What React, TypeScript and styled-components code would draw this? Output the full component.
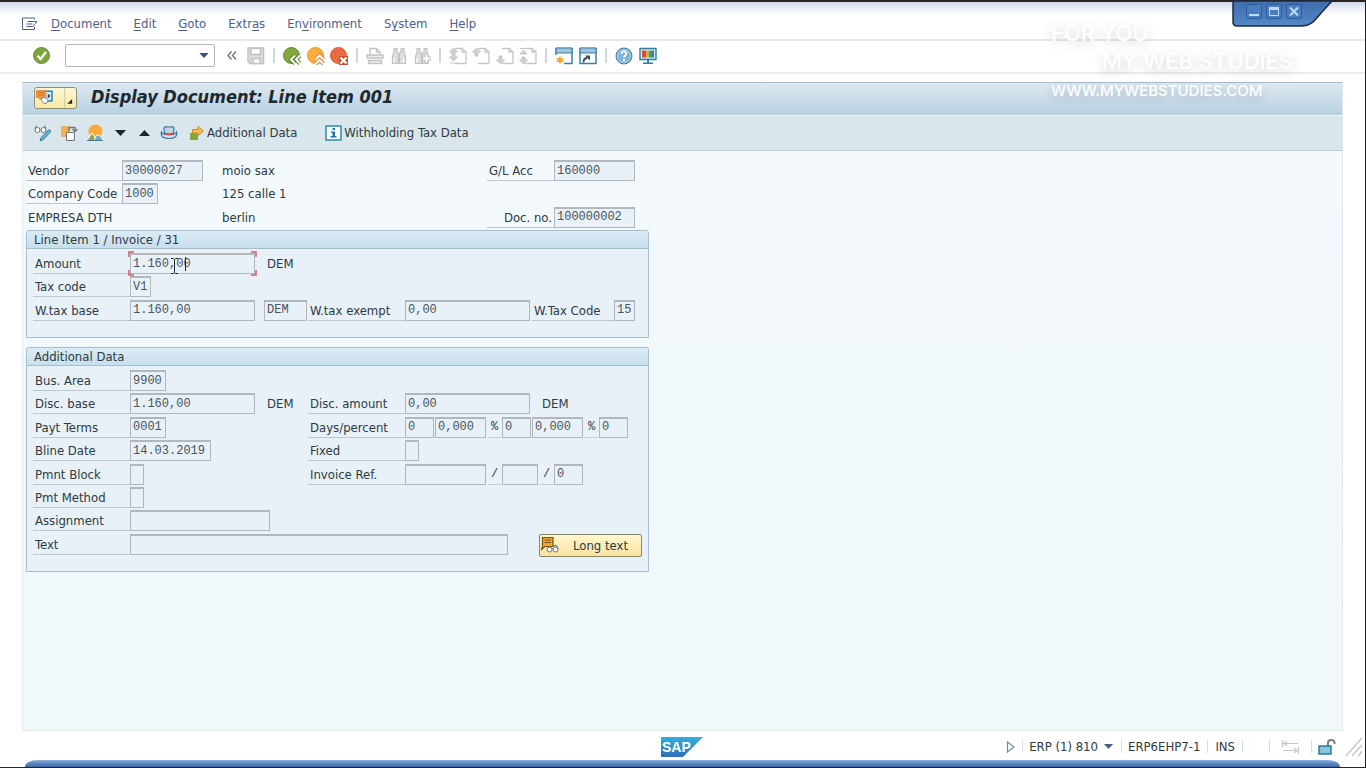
import React from "react";
import styled, { createGlobalStyle } from "styled-components";

const ui = `"DejaVu Sans Condensed", "DejaVu Sans", Tahoma, sans-serif`;
const mono = `"Liberation Mono", "Courier New", monospace`;

const GlobalStyle = createGlobalStyle`
  * { box-sizing: border-box; }
  html, body { margin: 0; padding: 0; }
  body { background: #fff; color: #2e3a42; font-family: ${ui}; font-size: 13px; }
  button, input, select { font: inherit; color: inherit; margin: 0; }
`;

const Window = styled.div`
  position: relative;
  display: flex;
  flex-direction: column;
  min-height: 100vh;
  border-top: 2px solid #2a2427;
  border-right: 1px solid #1d1d20;
  border-bottom: 1px solid #1f2733;
  background: linear-gradient(#cfd7e8, #eef1f8 7px, #fff 13px) no-repeat #fff;
`;

const MenuBar = styled.nav`
  display: flex;
  align-items: center;
  gap: 22px;
  height: 39px;
  padding: 7px 22px 0;
  border-bottom: 2px solid #e9e9eb;
`;

const MenuIcon = styled.span`
  display: flex;
  width: 16px;
  margin-right: -9px;
`;

const MenuItem = styled.button`
  padding: 0;
  border: 0;
  background: none;
  color: #4d6088;
  line-height: 18px;
  u { text-underline-offset: 2px; }
`;

const SystemBar = styled.div`
  display: flex;
  align-items: center;
  height: 33px;
  padding-left: 33px;
  padding-bottom: 2px;
  border-bottom: 2px solid #ebebed;
`;

const IconButton = styled.button<{ $width?: number }>`
  display: flex;
  align-items: center;
  justify-content: center;
  width: ${(p) => p.$width ?? 18}px;
  height: 20px;
  padding: 0;
  border: 0;
  background: none;
  svg { display: block; flex: none; }
`;

const IconGroup = styled.div<{ $width: number }>`
  display: flex;
  justify-content: space-between;
  width: ${(p) => p.$width}px;
`;

const BarRule = styled.span`
  width: 2px;
  height: 15px;
  margin: 0 8px;
  background: #c9dae4;
`;

const CommandBox = styled.div`
  position: relative;
  width: 150px;
  height: 23px;
  margin: 0 8px 0 14px;
  svg { position: absolute; right: 6px; top: 9px; pointer-events: none; }
`;

const CommandSelect = styled.select`
  appearance: none;
  width: 100%;
  height: 100%;
  border: 1px solid #b4b4b6;
  border-radius: 2px;
  background: #fff;
`;

const Collapse = styled(IconButton)`
  margin-right: 6px;
  color: #666b72;
`;

const Panel = styled.main`
  display: flex;
  flex: 1;
  flex-direction: column;
  margin: 8px 22px 0 22px;
  border: 1px solid #e3e9ee;
  border-top-color: #a9bccb;
  background: linear-gradient(#f3f9fc, #f0f8fa);
`;

const TitleBar = styled.header`
  display: flex;
  align-items: center;
  height: 33px;
  padding: 0 11px 2px;
  border-bottom: 1px solid #f0f7fa;
  background: linear-gradient(#dce9f1, #b7d1e0);
`;

const ServiceButton = styled.button`
  display: flex;
  align-items: stretch;
  width: 43px;
  height: 22px;
  padding: 0;
  border: 1px solid #8d8f7c;
  border-radius: 3px;
  background: linear-gradient(#fff8d8, #fbe8a4);
`;

const Title = styled.h1`
  margin: 0 0 2px 14px;
  color: #20282e;
  font-size: 18px;
  line-height: 24px;
  font-style: italic;
  font-weight: 700;
  white-space: nowrap;
`;

const AppBar = styled.div`
  display: flex;
  align-items: center;
  height: 35px;
  padding: 0 11px;
  border-bottom: 1px solid #b9cdd8;
  background: #d9e7ed;
`;

const AppIcons = styled.div`
  display: flex;
  gap: 8px;
  margin-right: 11px;
`;

const AppButton = styled.button`
  display: flex;
  align-items: center;
  gap: 2px;
  margin-right: 28px;
  padding: 0;
  border: 0;
  background: none;
  line-height: 18px;
  white-space: nowrap;
`;

const Form = styled.form`
  width: 626px;
  padding: 9px 0 0 3px;
`;

const Rows = styled.div<{ $count: number; $height: number }>`
  display: grid;
  grid-template-rows: repeat(${(p) => p.$count}, 1fr);
  height: ${(p) => p.$height}px;
`;

const HeadRow = styled.div`
  display: grid;
  grid-template-columns: 96px 100px 265px 67px 81px;
  align-items: start;
`;

const Row = styled.div`
  display: flex;
  align-items: flex-start;
`;

const LeftCell = styled.div`
  display: flex;
  flex: none;
  width: 275px;
`;

const Label = styled.label<{ $width: number; $end?: boolean; $gap?: number }>`
  flex: none;
  width: ${(p) => p.$width}px;
  height: 21px;
  margin-left: ${(p) => p.$gap ?? 0}px;
  padding: 0 2px;
  border-bottom: 1px solid #c0c6cb;
  line-height: 21px;
  text-align: ${(p) => (p.$end ? "right" : "left")};
  white-space: nowrap;
`;

const Plain = styled.span<{ $indent?: number }>`
  padding-left: ${(p) => p.$indent ?? 0}px;
  line-height: 21px;
  white-space: nowrap;
`;

const Mark = styled.span`
  width: 13px;
  height: 21px;
  margin: 0 1px 0 2px;
  border-bottom: 1px solid #c8cdd2;
  font-family: ${mono};
  font-size: 12px;
  line-height: 21px;
  text-align: center;
`;

const Field = styled.input<{ $width: number; $gap?: number }>`
  flex: none;
  display: block;
  width: ${(p) => p.$width}px;
  height: 21px;
  margin-left: ${(p) => p.$gap ?? 0}px;
  padding: 0 0 1px 2px;
  border: 1px solid #b0b6bb;
  border-top: 2px solid #b2b7bc;
  outline: 0;
  border-radius: 0;
  background: #e8f1f7;
  color: #4a545e;
  font-family: ${mono};
  font-size: 12px;
`;

const FocusFrame = styled.div`
  position: relative;
  svg { position: absolute; left: -2px; top: -2px; pointer-events: none; }
`;

const Group = styled.section`
  margin-bottom: 9px;
  border: 1px solid #a5bfd0;
  border-radius: 3px 3px 0 0;
  background: #e8f1f8;
`;

const GroupTitle = styled.h2`
  height: 18px;
  margin: 0;
  padding-left: 7px;
  border-bottom: 1px solid #a5bfd0;
  border-radius: 3px 3px 0 0;
  background: linear-gradient(#dcecf5, #c8dfec);
  font-size: 13px;
  font-weight: 400;
  line-height: 17px;
`;

const GroupBody = styled.div`
  padding: 4px 6px 14px;
`;

const LongText = styled.button`
  display: flex;
  align-items: center;
  gap: 13px;
  width: 103px;
  height: 23px;
  margin-left: 31px;
  padding: 0 0 0 1px;
  border: 1px solid #8a8468;
  border-radius: 2px;
  background: linear-gradient(#fff7cf, #fbe3a0);
  white-space: nowrap;
  svg { flex: none; }
`;

const StatusBar = styled.footer`
  display: grid;
  grid-template-columns: 1fr auto 1fr;
  align-items: center;
  height: 29px;
  padding: 2px 2px 0 0;
`;

const StatusRight = styled.div`
  display: flex;
  align-items: center;
  justify-content: flex-end;
  white-space: nowrap;
  svg { display: block; }
`;

const StatusRule = styled.span<{ $before: number; $after: number }>`
  width: 1px;
  height: 13px;
  margin: 0 ${(p) => p.$after}px 0 ${(p) => p.$before}px;
  background: #d8dbe0;
`;

const StatusButton = styled.button`
  display: flex;
  align-items: center;
  gap: 6px;
  padding: 0;
  border: 0;
  background: none;
`;

const SizeGrip = styled.span`
  margin-left: 9px;
`;

const BottomEdge = styled.div`
  height: 7px;
  margin: 0 25px;
  border-radius: 12px 12px 0 0 / 7px 7px 0 0;
  background: linear-gradient(#8fb2df, #5f8cc6 3px, #4068a8);
`;

const WindowTab = styled.div`
  position: absolute;
  top: -2px;
  right: 30px;
  width: 104px;
  height: 30px;
  > svg { position: absolute; inset: 0; }
`;

const TabButtons = styled.div`
  position: relative;
  display: flex;
  gap: 4px;
  padding: 4px 0 0 15px;
`;

const TabButton = styled.button`
  display: flex;
  align-items: center;
  justify-content: center;
  width: 16px;
  height: 15px;
  padding: 0;
  border: 1px solid #315c9a;
  border-radius: 2px;
  background: #4a7dbe;
`;

const Watermark = styled.div`
  position: absolute;
  top: 17px;
  right: 72px;
  width: 242px;
  color: #fff;
  font-family: Inter, sans-serif;
  font-weight: 500;
  pointer-events: none;
  text-shadow: 0 4px 10px rgba(90, 90, 90, 0.17), 0 2px 12px rgba(90, 90, 90, 0.1);
`;

const MarkLine = styled.div<{ $size: number; $end?: boolean; $height: number }>`
  font-size: ${(p) => p.$size}px;
  line-height: ${(p) => p.$height}px;
  text-align: ${(p) => (p.$end ? "right" : "left")};
  white-space: nowrap;
`;

const Caret = ({ up = false, size = 11, color = "#1f262b" }) => (
  <svg width={size} height={size === 11 ? 6 : 5} viewBox="0 0 11 6">
    <path d={up ? "M0 6 5.500 0 11 6z" : "M0 0h11L5.500 6z"} fill={color} />
  </svg>
);

const Disc = ({ fill, edge, children }: { fill: string; edge: string; children: React.ReactNode }) => (
  <svg width="18" height="18" viewBox="0 0 18 18">
    <circle cx="8.500" cy="8.500" r="8" fill={fill} stroke={edge} />
    {children}
  </svg>
);

const chevronsLeft = "M12 8.500 8 12.500l4 4M17 8.500l-4 4 4 4";
const chevronsUp = "M8.500 12.500l4-4 4 4M8.500 17l4-4 4 4";

const CheckIcon = () => (
  <Disc fill="#7fa63c" edge="#5f8d35">
    <path d="M4.500 8.800l3 3.200 5.500-7" fill="none" stroke="#fff" strokeWidth="2.200" />
  </Disc>
);
const BackIcon = () => (
  <Disc fill="#83a83b" edge="#5f8a37">
    <path d={chevronsLeft} fill="none" stroke="#55822f" strokeWidth="4" />
    <path d={chevronsLeft} fill="none" stroke="#fff" strokeWidth="2" />
  </Disc>
);
const UpIcon = () => (
  <Disc fill="#fbae3e" edge="#e99a35">
    <path d={chevronsUp} fill="none" stroke="#e07a2e" strokeWidth="4" />
    <path d={chevronsUp} fill="none" stroke="#fff" strokeWidth="2" />
  </Disc>
);
const CancelIcon = () => (
  <Disc fill="#ea6a45" edge="#d95b3d">
    <path d="M9 9h9v9H9z" fill="#d94a2c" />
    <path d="M10.500 10.500l6 6M16.500 10.500l-6 6" stroke="#fff" strokeWidth="2.200" />
  </Disc>
);
const SaveIcon = () => (
  <svg width="18" height="18" viewBox="0 0 18 18" fill="none" stroke="#c3c3c5" strokeWidth="1.500">
    <path d="M1 1h15.500v15.500H3L1 14.500z" fill="#dcdcde" />
    <path d="M4 1.500h9.500v6H4z" fill="#fff" />
    <path d="M4.500 11.500h8.500v5H4.500z" fill="#fff" />
    <path d="M6.500 12.500v3" />
  </svg>
);
const PrintIcon = () => (
  <svg width="18" height="18" viewBox="0 0 18 18" fill="none" stroke="#c3c3c5" strokeWidth="1.400">
    <path d="M4 8V1.500h6.500L14 5v3" fill="#fff" />
    <path d="M10.500 1.500V5H14" />
    <path d="M1 8h16v3H1z" fill="#ececee" />
    <path d="M2.500 13.500h13v3h-13z" fill="#ececee" />
  </svg>
);
const Binoculars = ({ next = false }) => (
  <svg width="18" height="18" viewBox="0 0 18 18" stroke="#c3c3c5" strokeWidth="1.200" fill="#dededf">
    <path d="M4 1.500h3v3l1.500 2v10h-6V9L4 5z" />
    <path d="M14 1.500h-3v3l-1.500 2v10h6V9L14 5z" />
    <path d="M4 11.500v4M13.500 11.500v4" stroke="#fff" />
    {next && <path d="M12 7h3v3h3v3h-3v3h-3v-3H9.500v-3H12z" fill="#fff" />}
  </svg>
);
const PageIcon = ({ kind }: { kind: "first" | "prev" | "next" | "last" }) => {
  const arrow = {
    first: "M4.500 1l4 4H6v5h2.500l-4 4-4-4H3V5H.500zM1 16h7",
    prev: "M4.500 1l4 4H6v4H3V5H.500z",
    next: "M4.500 17l4-4H6V9H3v4H.500z",
    last: "M1 1.500h7M4.500 3l3.500 4H1zM4.500 17l4-4H6v-3H3v3H.500z",
  }[kind];
  return (
    <svg width="18" height="18" viewBox="0 0 18 18" stroke="#c6c6c8" strokeWidth="1.300" fill="none">
      <path d="M6 1.500h7L17 5v11.500H6" fill="#fff" />
      <path d="M13 1.500V5h4" />
      <path d={arrow} fill="#cfcfd1" strokeWidth="1" />
    </svg>
  );
};
const NewWindowIcon = () => (
  <svg width="18" height="18" viewBox="0 0 18 18" fill="none">
    <path d="M1 8V1.500h16v15H9" stroke="#3d7da6" strokeWidth="1.500" />
    <path d="M1 1h16v5H1z" fill="#9cc5de" stroke="#3d7da6" />
    <path d="M5 8.500l1.200 3 3-.8-1.800 2.300 1.800 2.300-3-.6L5 17.700l-1.200-3-3 .6L2.600 13 .8 10.700l3 .8z" fill="#f4a52d" />
  </svg>
);
const ShortcutIcon = () => (
  <svg width="18" height="18" viewBox="0 0 18 18" fill="none">
    <path d="M1 1.500h16v15H1z" stroke="#3d7da6" strokeWidth="1.500" fill="#fff" />
    <path d="M1 1h16v5H1z" fill="#9cc5de" stroke="#3d7da6" />
    <path d="M4.500 15.500c0-3 1.500-4.500 4-4.500" stroke="#444a50" strokeWidth="1.800" />
    <path d="M6 8.500h5v5z" fill="#444a50" />
  </svg>
);
const HelpIcon = () => (
  <svg width="18" height="18" viewBox="0 0 18 18">
    <circle cx="9" cy="9" r="8" fill="#7fb2d6" stroke="#3f7ba9" />
    <circle cx="9" cy="9" r="6.500" fill="none" stroke="#b8d6e8" strokeWidth="1" />
    <path d="M6.500 7c0-3.500 5-3.300 5-.5 0 2-2.500 2-2.500 4M9 12v2" fill="none" stroke="#fff" strokeWidth="1.800" />
  </svg>
);
const MonitorIcon = () => (
  <svg width="18" height="18" viewBox="0 0 18 18">
    <path d="M1 1.500h16v11H1z" fill="#d7e8ef" stroke="#2d7f9f" strokeWidth="1.400" />
    <path d="M3 3.500h4v7H3z" fill="#d9493a" />
    <path d="M7 3.500h2.500v7H7z" fill="#e9a83c" />
    <path d="M9.500 3.500H12v7H9.500z" fill="#5e9f48" />
    <path d="M12 3.500h3v7h-3z" fill="#3b7fb8" />
    <path d="M8 13h2v2.500h4V17H4v-1.500h4z" fill="#2d7f9f" />
  </svg>
);
const ServiceIcon = () => (
  <svg width="42" height="20" viewBox="0 0 42 20">
    <path d="M1.500 2.500h10v7H7l-2 2v-2H1.500z" fill="#f79a45" stroke="#e07f2c" />
    <path d="M3 4.500h7M3 7h7" stroke="#c96a22" />
    <path d="M11.500 3h6v10h-6" fill="#d5edf5" stroke="#2e83a8" strokeWidth="1.500" />
    <path d="M13 5.500 16 8l-3 2.500z" fill="#24506e" />
    <path d="M6.500 10.500l3-1.500 4 3.500-2 3H9l-2.500-3z" fill="#fff" stroke="#777d82" />
    <path d="M30.500 0v20" stroke="#c9c09a" />
    <path d="M38 11v5h-5z" fill="#26292c" />
  </svg>
);
const GlassesPencilIcon = () => (
  <svg width="18" height="18" viewBox="0 0 18 18" fill="none">
    <circle cx="3.500" cy="6" r="2.500" stroke="#666d73" fill="#fff" />
    <circle cx="9.500" cy="6" r="2.500" stroke="#666d73" fill="#fff" />
    <path d="M1 4.500 2.500 1.500M12 4.500l-1.500-3" stroke="#666d73" />
    <path d="M15 5.500l2 1.700-7.500 8.300-3.500 1.500 1.300-3.600z" fill="#6fb3cf" stroke="#2f7d9f" />
  </svg>
);
const CopyIcon = () => (
  <svg width="18" height="18" viewBox="0 0 18 18" fill="none">
    <path d="M1 2h9v11H1z" fill="#f8b04a" />
    <path d="M6.500 8.500h8v8h-8z" fill="#fff" stroke="#70777d" />
    <path d="M9 7V3.500h6V7M12.500 5l2.500 2.500L17.500 5" stroke="#70777d" strokeWidth="1.300" />
  </svg>
);
const SunHillsIcon = () => (
  <svg width="18" height="18" viewBox="0 0 18 18">
    <circle cx="9.500" cy="7.500" r="7" fill="#f8ab3f" />
    <path d="M1 16.500 6 9l5 7.500z" fill="#86a944" stroke="#fff" />
    <path d="M8.500 16.500c0-3 2-5.500 3.500-5.500s4.500 2.500 4.500 5.500z" fill="#72abc5" stroke="#fff" />
    <path d="M1 16.500h16" stroke="#467b8c" />
  </svg>
);
const HatIcon = () => (
  <svg width="18" height="16" viewBox="0 0 18 16">
    <path d="M1.500 7C0 11.500 4 13.500 9 13.500s9-2 7.500-6.500c-1 2-3 2.500-3 2.500h-9s-2-.5-3-2.500z" fill="#cfe4f0" stroke="#3578a0" strokeWidth="1.200" />
    <path d="M4.500 9 4 3.500C4 1 6.500 2 9 2s5-1 5 1.500L13.500 9z" fill="#b8d8ea" stroke="#3578a0" strokeWidth="1.200" />
    <path d="M4.800 7.500q4.200 1.500 8.400 0v2.200q-4.200 1.500-8.400 0z" fill="#d8504a" />
  </svg>
);
const ForwardIcon = () => (
  <svg width="16" height="16" viewBox="0 0 16 16">
    <path d="M1 8h8v7H1z" fill="#87a93c" />
    <path d="M3.500 4.500H9v-3L14.500 6 9 10.500V8H3.500z" fill="#fbbf4d" stroke="#c98f2c" strokeWidth="1" />
  </svg>
);
const InfoIcon = () => (
  <svg width="17" height="16" viewBox="0 0 17 16">
    <path d="M1 1h15v14H1z" fill="#fff" stroke="#2b8aae" strokeWidth="1.500" />
    <path d="M7.500 3h2.500v2H7.500zM6 6.500h4V11h1.500v1.500H5.500V11h2V8H6z" fill="#2277a0" />
  </svg>
);
const NoteIcon = () => (
  <svg width="19" height="18" viewBox="0 0 19 18" fill="none">
    <path d="M1.500 1.500h10.500v9H4L.500 13.500 1.500 10z" fill="#f3a536" stroke="#74501d" strokeWidth="1.200" />
    <path d="M3.500 4h6.500M3.500 6.500h6.500" stroke="#7a4a14" />
    <circle cx="8.500" cy="13.500" r="2.500" fill="#fff" stroke="#6c7075" />
    <circle cx="14.500" cy="13.500" r="2.500" fill="#fff" stroke="#6c7075" />
    <path d="M11 13h1M13 9.500h2.500l1.500 3" stroke="#6c7075" />
  </svg>
);

const SapLogo = () => (
  <svg width="42" height="20" viewBox="0 0 42 20" role="img" aria-label="SAP">
    <defs>
      <linearGradient id="sap" x1="0" y1="0" x2="0" y2="1">
        <stop offset="0" stopColor="#35aed8" />
        <stop offset="1" stopColor="#2b6fb5" />
      </linearGradient>
    </defs>
    <path d="M0 0h42L22 20H0z" fill="url(#sap)" />
    <text x="1" y="15" fill="#fff" fontFamily="Liberation Sans" fontWeight="700" fontSize="14">SAP</text>
  </svg>
);

const menu: [string, string, string][] = [
  ["", "D", "ocument"],
  ["", "E", "dit"],
  ["", "G", "oto"],
  ["Extr", "a", "s"],
  ["En", "v", "ironment"],
  ["S", "y", "stem"],
  ["", "H", "elp"],
];

type BoxProps = { id: string; value?: string; width: number; gap?: number; label?: string };
const Box = ({ id, value = "", width, gap, label }: BoxProps) => (
  <Field id={id} aria-label={label} defaultValue={value} readOnly $width={width} $gap={gap} />
);

export default function App() {
  return (
    <Window>
      <GlobalStyle />
      <MenuBar>
        <MenuIcon>
          <svg width="16" height="14" viewBox="0 0 16 14" fill="none" stroke="#4d6088">
            <path d="M12.500 2.500V1H.500v11.500h12V10" />
            <path d="M5.500 4.500H15L11 9.500H4.500M4.500 7h6" />
          </svg>
        </MenuIcon>
        {menu.map(([a, b, c]) => (
          <MenuItem key={a + b + c} type="button">{a}<u>{b}</u>{c}</MenuItem>
        ))}
      </MenuBar>

      <SystemBar>
        <IconButton aria-label="Enter"><CheckIcon /></IconButton>
        <CommandBox>
          <CommandSelect aria-label="Command field"><option></option></CommandSelect>
          <Caret size={10} color="#3b4f78" />
        </CommandBox>
        <Collapse aria-label="Hide command field">
          <svg width="10" height="9" viewBox="0 0 10 9" fill="none" stroke="currentColor" strokeWidth="1.200">
            <path d="M4.500.500 1 4.500l3.500 4M9 .500 5.500 4.500 9 8.500" />
          </svg>
        </Collapse>
        <IconButton aria-label="Save"><SaveIcon /></IconButton>
        <BarRule />
        <IconGroup $width={65}>
          <IconButton aria-label="Back"><BackIcon /></IconButton>
          <IconButton aria-label="Exit"><UpIcon /></IconButton>
          <IconButton aria-label="Cancel"><CancelIcon /></IconButton>
        </IconGroup>
        <BarRule />
        <IconGroup $width={65}>
          <IconButton aria-label="Print"><PrintIcon /></IconButton>
          <IconButton aria-label="Find"><Binoculars /></IconButton>
          <IconButton aria-label="Find next"><Binoculars next /></IconButton>
        </IconGroup>
        <BarRule />
        <IconGroup $width={88}>
          <IconButton aria-label="First page"><PageIcon kind="first" /></IconButton>
          <IconButton aria-label="Previous page"><PageIcon kind="prev" /></IconButton>
          <IconButton aria-label="Next page"><PageIcon kind="next" /></IconButton>
          <IconButton aria-label="Last page"><PageIcon kind="last" /></IconButton>
        </IconGroup>
        <BarRule />
        <IconGroup $width={42}>
          <IconButton aria-label="New session"><NewWindowIcon /></IconButton>
          <IconButton aria-label="Create shortcut"><ShortcutIcon /></IconButton>
        </IconGroup>
        <BarRule />
        <IconGroup $width={42}>
          <IconButton aria-label="Help"><HelpIcon /></IconButton>
          <IconButton aria-label="Customize layout"><MonitorIcon /></IconButton>
        </IconGroup>
      </SystemBar>

      <Panel>
        <TitleBar>
          <ServiceButton aria-label="Services for object"><ServiceIcon /></ServiceButton>
          <Title>Display Document: Line Item 001</Title>
        </TitleBar>
        <AppBar>
          <AppIcons>
            <IconButton aria-label="Display or change"><GlassesPencilIcon /></IconButton>
            <IconButton aria-label="Other line item"><CopyIcon /></IconButton>
            <IconButton aria-label="Overview"><SunHillsIcon /></IconButton>
            <IconButton aria-label="Next item" $width={16}><Caret /></IconButton>
            <IconButton aria-label="Previous item" $width={16}><Caret up /></IconButton>
            <IconButton aria-label="Document header"><HatIcon /></IconButton>
          </AppIcons>
          <AppButton type="button"><ForwardIcon />Additional Data</AppButton>
          <AppButton type="button"><InfoIcon />Withholding Tax Data</AppButton>
        </AppBar>

        <Form>
          <Rows $count={3} $height={70}>
            <HeadRow>
              <Label htmlFor="vendor" $width={96}>Vendor</Label>
              <Box id="vendor" value="30000027" width={81} />
              <Plain>moio sax</Plain>
              <Label htmlFor="gl" $width={67}>G/L Acc</Label>
              <Box id="gl" value="160000" width={81} />
            </HeadRow>
            <HeadRow>
              <Label htmlFor="company" $width={96}>Company Code</Label>
              <Box id="company" value="1000" width={36} />
              <Plain>125 calle 1</Plain>
            </HeadRow>
            <HeadRow>
              <Plain $indent={2}>EMPRESA DTH</Plain>
              <span />
              <Plain>berlin</Plain>
              <Label htmlFor="docno" $width={67} $end>Doc. no.</Label>
              <Box id="docno" value="100000002" width={81} />
            </HeadRow>
          </Rows>

          <Group>
            <GroupTitle>Line Item 1 / Invoice / 31</GroupTitle>
            <GroupBody>
              <Rows $count={3} $height={70}>
                <Row>
                  <Label htmlFor="amount" $width={97}>Amount</Label>
                  <FocusFrame>
                    <Box id="amount" value="1.160,00" width={125} />
                    <svg width="129" height="26" viewBox="0 0 129 26" fill="none">
                      <path d="M1 6V1h5M123 1h5v5M128 19v5h-5M6 24H1v-5" stroke="#d2586a" strokeWidth="1.500" />
                      <path d="M57.500 6v14" stroke="#20262b" />
                      <path d="M43 7.500h2.500l1 1 1-1H50M46.500 8v14M43 22.500h2.500l1-1 1 1H50" stroke="#20262b" />
                    </svg>
                  </FocusFrame>
                  <Plain $indent={12}>DEM</Plain>
                </Row>
                <Row>
                  <Label htmlFor="taxcode" $width={97}>Tax code</Label>
                  <Box id="taxcode" value="V1" width={21} />
                </Row>
                <Row>
                  <LeftCell>
                    <Label htmlFor="wbase" $width={97}>W.tax base</Label>
                    <Box id="wbase" value="1.160,00" width={125} />
                    <Box id="wcur" label="Currency" value="DEM" width={43} gap={9} />
                  </LeftCell>
                  <Label htmlFor="wexempt" $width={97}>W.tax exempt</Label>
                  <Box id="wexempt" value="0,00" width={125} />
                  <Label htmlFor="wcode" $width={82} $gap={2}>W.Tax Code</Label>
                  <Box id="wcode" value="15" width={21} />
                </Row>
              </Rows>
            </GroupBody>
          </Group>

          <Group>
            <GroupTitle>Additional Data</GroupTitle>
            <GroupBody>
              <Rows $count={8} $height={187}>
                <Row>
                  <Label htmlFor="area" $width={97}>Bus. Area</Label>
                  <Box id="area" value="9900" width={36} />
                </Row>
                <Row>
                  <LeftCell>
                    <Label htmlFor="dbase" $width={97}>Disc. base</Label>
                    <Box id="dbase" value="1.160,00" width={125} />
                    <Plain $indent={12}>DEM</Plain>
                  </LeftCell>
                  <Label htmlFor="damount" $width={97}>Disc. amount</Label>
                  <Box id="damount" value="0,00" width={125} />
                  <Plain $indent={12}>DEM</Plain>
                </Row>
                <Row>
                  <LeftCell>
                    <Label htmlFor="terms" $width={97}>Payt Terms</Label>
                    <Box id="terms" value="0001" width={36} />
                  </LeftCell>
                  <Label htmlFor="days1" $width={97}>Days/percent</Label>
                  <Box id="days1" value="0" width={29} />
                  <Box id="pct1" label="Percent 1" value="0,000" width={51} gap={1} />
                  <Mark>%</Mark>
                  <Box id="days2" label="Days 2" value="0" width={29} />
                  <Box id="pct2" label="Percent 2" value="0,000" width={51} gap={1} />
                  <Mark>%</Mark>
                  <Box id="days3" label="Days 3" value="0" width={29} />
                </Row>
                <Row>
                  <LeftCell>
                    <Label htmlFor="bline" $width={97}>Bline Date</Label>
                    <Box id="bline" value="14.03.2019" width={81} />
                  </LeftCell>
                  <Label htmlFor="fixed" $width={97}>Fixed</Label>
                  <Box id="fixed" width={14} />
                </Row>
                <Row>
                  <LeftCell>
                    <Label htmlFor="block" $width={97}>Pmnt Block</Label>
                    <Box id="block" width={14} />
                  </LeftCell>
                  <Label htmlFor="inv" $width={97}>Invoice Ref.</Label>
                  <Box id="inv" width={81} />
                  <Mark>/</Mark>
                  <Box id="invyear" label="Invoice year" width={36} />
                  <Mark>/</Mark>
                  <Box id="invitem" label="Invoice item" value="0" width={29} />
                </Row>
                <Row>
                  <Label htmlFor="method" $width={97}>Pmt Method</Label>
                  <Box id="method" width={14} />
                </Row>
                <Row>
                  <Label htmlFor="assign" $width={97}>Assignment</Label>
                  <Box id="assign" width={140} />
                </Row>
                <Row>
                  <Label htmlFor="text" $width={97}>Text</Label>
                  <Box id="text" width={378} />
                  <LongText type="button"><NoteIcon />Long text</LongText>
                </Row>
              </Rows>
            </GroupBody>
          </Group>
        </Form>
      </Panel>

      <StatusBar>
        <span />
        <SapLogo />
        <StatusRight>
          <svg width="9" height="12" viewBox="0 0 9 12">
            <path d="M1.500 1v10L8 6z" fill="#fff" stroke="#6f8fae" strokeWidth="1.200" />
          </svg>
          <StatusRule $before={7} $after={6} />
          <StatusButton type="button">ERP (1) 810<Caret size={9} color="#44617e" /></StatusButton>
          <StatusRule $before={8} $after={6} />
          ERP6EHP7-1
          <StatusRule $before={7} $after={7} />
          INS
          <StatusRule $before={7} $after={26} />
          <StatusRule $before={0} $after={12} />
          <svg width="17" height="14" viewBox="0 0 17 14" fill="none" stroke="#c4c6ca" strokeWidth="1.200">
            <path d="M.600 0v7M16.400 7v7M2 3.500h14M5 1 2 3.500 5 6M1 10.500h14M12 8l3 2.500-3 2.500" />
          </svg>
          <StatusRule $before={12} $after={6} />
          <svg width="18" height="17" viewBox="0 0 18 17" fill="none">
            <path d="M10 8V4.500C10 1 16.500 1 16.500 4.500V6" stroke="#7b7f84" strokeWidth="2" />
            <path d="M1 8h12v8H1z" fill="#8cc4dc" stroke="#2a7c9e" strokeWidth="1.500" />
          </svg>
          <SizeGrip>
            <svg width="18" height="20" viewBox="0 0 18 20" fill="none" stroke="#c6c8cc" strokeWidth="1.500">
              <path d="M1 19 17 1M7 19l10-11M13 19l4-4.500" />
            </svg>
          </SizeGrip>
        </StatusRight>
      </StatusBar>
      <BottomEdge />

      <WindowTab>
        <svg width="104" height="30" viewBox="0 0 104 30">
          <defs>
            <linearGradient id="tab" x1="0" y1="0" x2="0" y2="1">
              <stop offset="0" stopColor="#3f6cae" />
              <stop offset="1" stopColor="#5288c9" />
            </linearGradient>
          </defs>
          <path d="M2 1v21q0 4 4 4h64c11 0 15-7 21-14L101 1z" fill="url(#tab)" stroke="#1d2a3e" strokeWidth="1.500" />
        </svg>
        <TabButtons>
          <TabButton aria-label="Minimize">
            <svg width="12" height="11" viewBox="0 0 12 11"><path d="M1 8h10v2H1z" fill="#b9dcff" /></svg>
          </TabButton>
          <TabButton aria-label="Maximize">
            <svg width="12" height="11" viewBox="0 0 12 11">
              <path d="M1.500 1.500h9v8h-9z" fill="none" stroke="#b9dcff" />
              <path d="M1 1h10v3H1z" fill="#b9dcff" />
            </svg>
          </TabButton>
          <TabButton aria-label="Close">
            <svg width="12" height="11" viewBox="0 0 12 11">
              <path d="M2 1.500l8 8M10 1.500l-8 8" stroke="#b9dcff" strokeWidth="2" />
            </svg>
          </TabButton>
        </TabButtons>
      </WindowTab>

      <Watermark aria-hidden="true">
        <MarkLine $size={22} $height={28}>FOR YOU</MarkLine>
        <MarkLine $size={22} $height={28} $end>MY WEB STUDIES</MarkLine>
        <MarkLine $size={15} $height={32}>WWW.MYWEBSTUDIES.COM</MarkLine>
      </Watermark>
    </Window>
  );
}
